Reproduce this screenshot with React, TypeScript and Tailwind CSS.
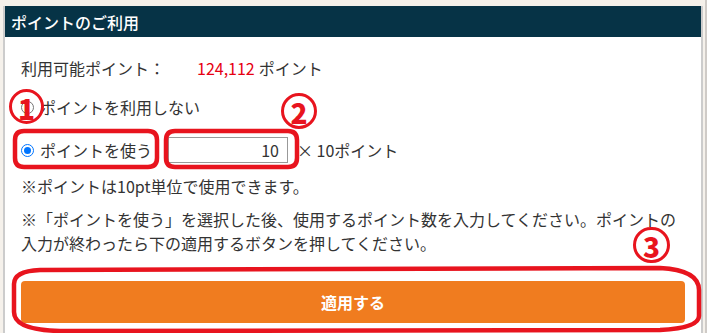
import React from "react";

const RED = "#e8141e";

function Radio({ checked }: { checked?: boolean }) {
  return checked ? (
    <span className="w-[13px] h-[13px] rounded-full border-[1.5px] border-[#0075ff] flex items-center justify-center shrink-0 bg-white">
      <span className="w-[7px] h-[7px] rounded-full bg-[#0075ff]" />
    </span>
  ) : (
    <span className="w-[13px] h-[13px] rounded-full border border-[#767676] shrink-0 bg-white" />
  );
}

function CircleNum({ n, cls }: { n: string; cls: string }) {
  return (
    <div
      className={`absolute rounded-full border-[3px] border-[#e8141e] flex items-center justify-center text-[#e8141e] font-black text-[28px] leading-none ${cls}`}
      style={{ fontFamily: '"Noto Sans CJK JP", "Noto Sans", sans-serif' }}
    >
      <span className="mt-[2px]">{n}</span>
    </div>
  );
}

export default function App() {
  return (
    <div
      className="relative w-[707px] h-[333px] overflow-hidden bg-[#f5f1eb] pt-[6px] pl-[3px]"
      style={{ fontFamily: '"Noto Sans CJK JP", "Noto Sans", sans-serif' }}
    >
      <div className="absolute right-0 top-0 w-[2px] h-full bg-[#cfcbc7]" />
      <div className="w-[700px] h-[340px] border-x-2 border-[#cccccc] bg-white">
        <div className="h-[31px] bg-[#063346] text-white text-[16px] font-medium pl-[6px] flex items-center">
          ポイントのご利用
        </div>
        <div className="px-4 text-[16px] text-[#333]">
          <div className="mt-[19px] h-[24px] flex items-center">
            <span className="w-[176px]">利用可能ポイント：</span>
            <span className="text-[#e60012]">124,112</span>
            <span className="ml-[4px]">ポイント</span>
          </div>
          <div className="mt-[15px] h-[24px] flex items-center gap-[6px]">
            <Radio />
            <span>ポイントを利用しない</span>
          </div>
          <div className="mt-[18px] h-[26px] flex items-center">
            <div className="w-[147px] flex items-center gap-[6px]">
              <Radio checked />
              <span>ポイントを使う</span>
            </div>
            <div className="w-[120px] h-[26px] border border-[#999] flex items-center justify-end pr-[8px]">
              10
            </div>
            <span className="ml-[9px]">× 10ポイント</span>
          </div>
          <div className="mt-[11px] h-[24px] flex items-center">
            ※ポイントは10pt単位で使用できます。
          </div>
          <p className="mt-[9px] leading-[24px]">
            ※「ポイントを使う」を選択した後、使用するポイント数を入力してください。ポイントの入力が終わったら下の適用するボタンを押してください。
          </p>
          <button className="mt-[26px] w-full h-[42px] rounded-[4px] bg-[#f07c1f] text-white font-bold text-[16px] flex items-center justify-center">
            適用する
          </button>
        </div>
      </div>

      {/* annotations */}
      <CircleNum n="1" cls="left-[9px] top-[89px] w-[35px] h-[35px]" />
      <CircleNum n="2" cls="left-[281px] top-[93px] w-[36px] h-[36px]" />
      <CircleNum n="3" cls="left-[633px] top-[227px] w-[37px] h-[36px]" />
      <svg
        className="absolute left-0 top-0 pointer-events-none"
        width="707"
        height="333"
        viewBox="0 0 707 333"
        fill="none"
        stroke={RED}
        strokeWidth="4.5"
      >
        <path d="M 24 131 L 148 131 Q 157 131 157 140 L 157 158 Q 157 167 148 167 L 24 167 Q 15 167 15 158 L 15 140 Q 15 131 24 131 Z" />
        <path d="M 175 131 L 288 131 Q 297 131 297 140 L 297 158 Q 297 167 288 167 L 175 167 Q 166 167 166 158 L 166 140 Q 166 131 175 131 Z" />
        <path d="M 14 284 Q 14 271 40 270 L 660 268 Q 699 270 699 290 L 699 316 Q 699 328 660 330 L 60 331 Q 14 330 14 312 Z" />
      </svg>
    </div>
  );
}
